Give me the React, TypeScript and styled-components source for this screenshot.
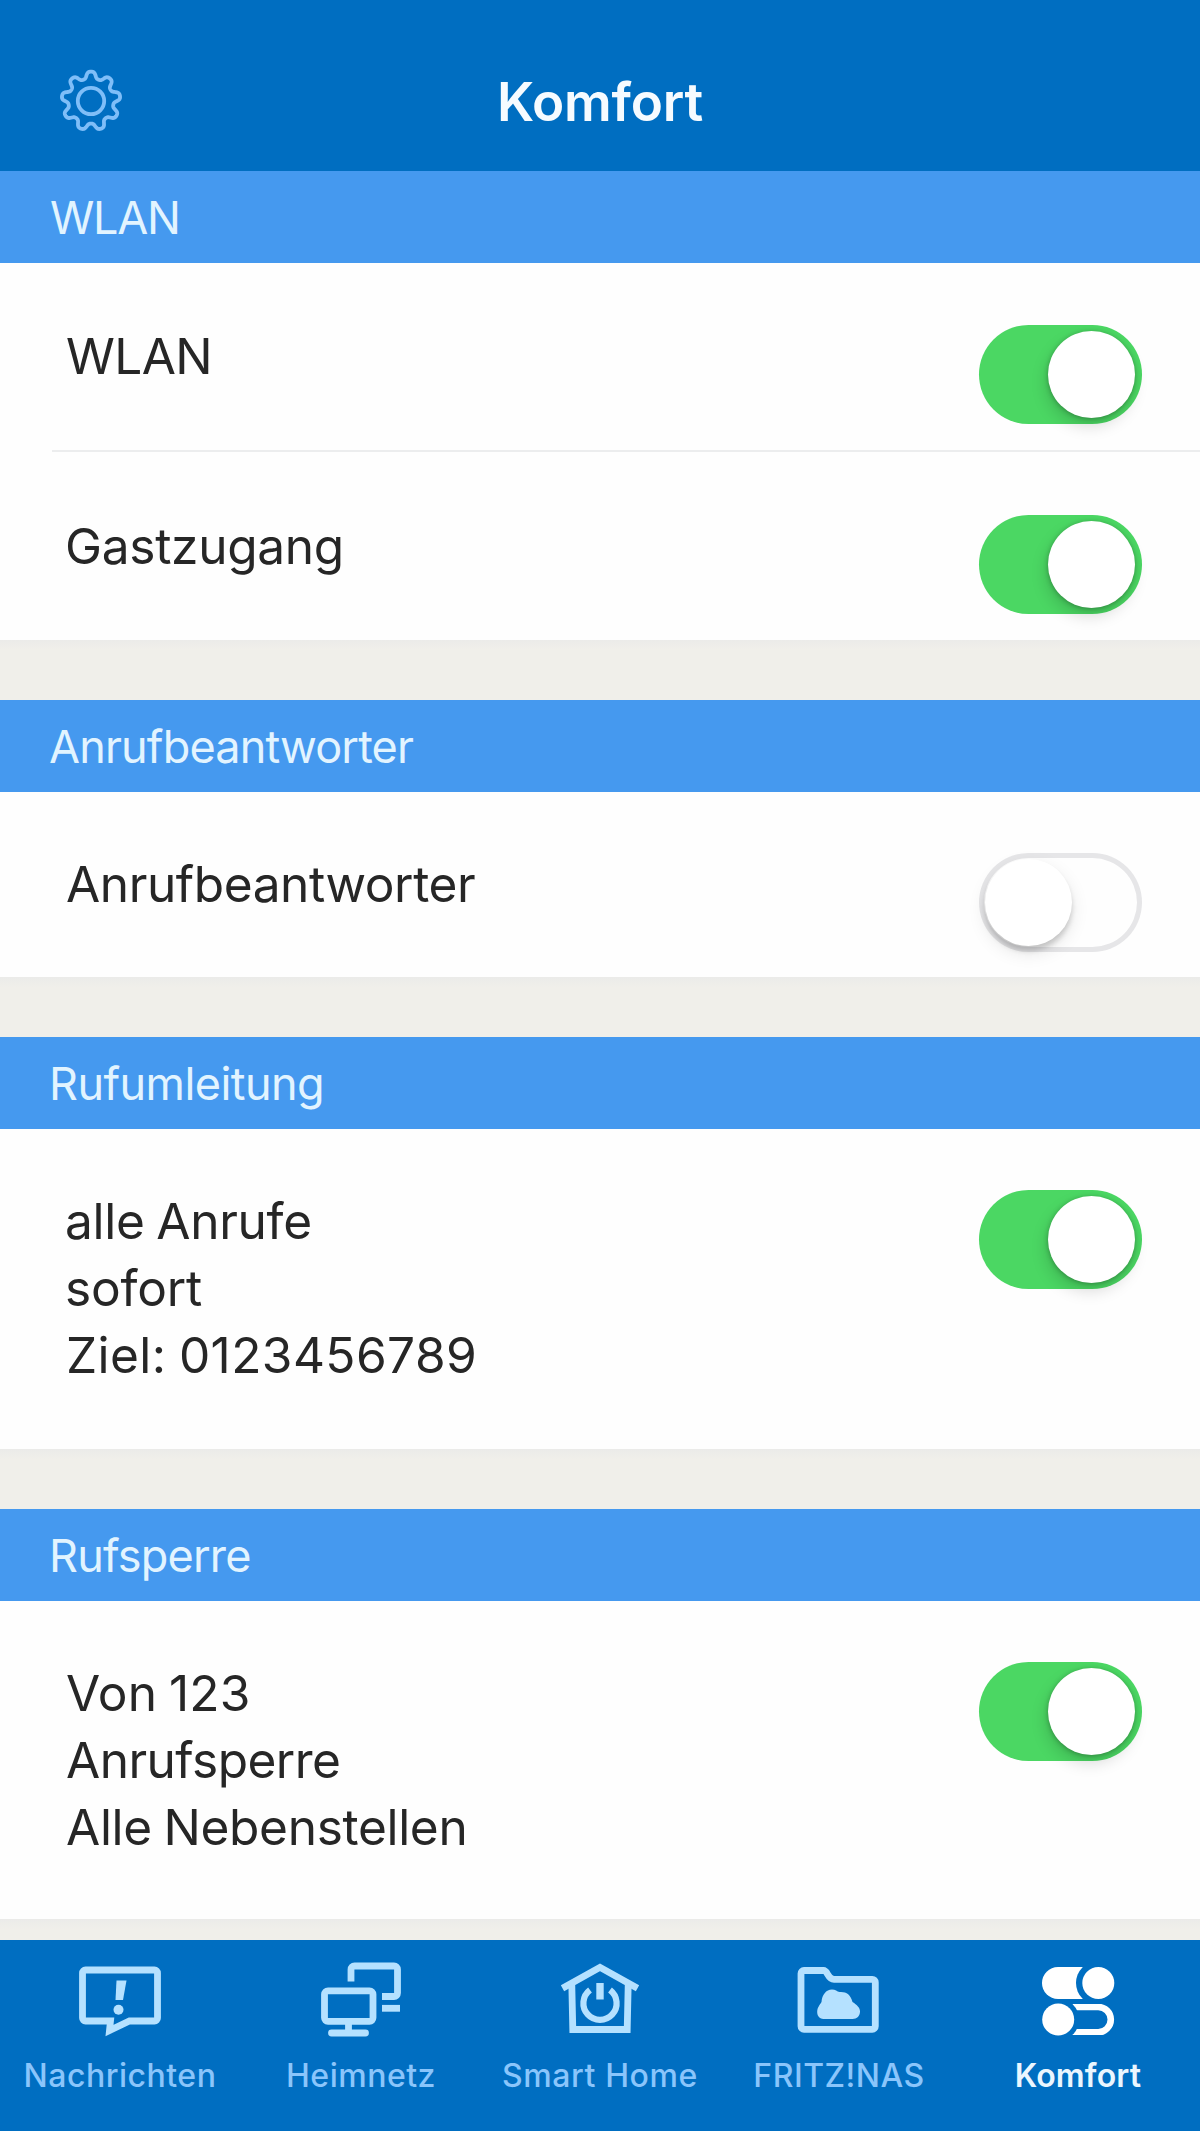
import React, { useState } from "react";
import styled, { createGlobalStyle } from "styled-components";

const GlobalStyle = createGlobalStyle`
  * { box-sizing: border-box; }
  body {
    margin: 0;
    background: #f0efea;
    font-family: Inter, Roboto, "Liberation Sans", sans-serif;
  }
`;

const Screen = styled.div`
  display: flex;
  flex-direction: column;
  width: 1200px;
  height: 2131px;
  overflow: hidden;
  background: #f0efea;
`;

const Header = styled.header`
  flex: none;
  display: grid;
  grid-template-columns: 1fr auto 1fr;
  align-items: start;
  height: 171px;
  padding: 69px 59px 0;
  background: #006ec1;
`;

const GearButton = styled.button`
  display: block;
  width: 64px;
  height: 64px;
  padding: 0;
  border: 0;
  background: none;
  color: #7fbef8;
`;

const Title = styled.h1`
  margin: 1px 0 0;
  font-size: 53px;
  line-height: 64px;
  font-weight: 600;
  letter-spacing: -0.2px;
  color: #f6fbff;
`;

const Content = styled.main`
  flex: 1;
  min-height: 0;
  overflow: hidden;
`;

const Section = styled.section<{ $height: number }>`
  display: flex;
  flex-direction: column;
  height: ${(p) => p.$height}px;
`;

const SectionTitle = styled.h2<{ $inset: number; $tracking: number }>`
  flex: none;
  height: 92px;
  margin: 0;
  padding: 1px 0 0 ${(p) => p.$inset}px;
  font-size: 45px;
  line-height: 92px;
  font-weight: 400;
  letter-spacing: ${(p) => p.$tracking}px;
  color: #e2f4ff;
  background: #4599ef;
`;

const Rows = styled.div`
  flex: 1;
  display: flex;
  flex-direction: column;
  background: #fefefe;
`;

const Divider = styled.hr`
  width: 1148px;
  height: 2px;
  margin: 0 0 0 auto;
  border: 0;
  background: #ecedee;
`;

const Row = styled.div<{ $top: number }>`
  flex: 1;
  display: flex;
  justify-content: space-between;
  align-items: flex-start;
  padding: ${(p) => p.$top}px 58px 0 66px;
`;

const Lines = styled.div`
  font-size: 49.6px;
  line-height: 67.2px;
  word-spacing: -2px;
  color: #262626;
`;

const TextLine = styled.div<{ $tracking: number; $shift: number }>`
  margin-left: ${(p) => p.$shift}px;
  letter-spacing: ${(p) => p.$tracking}px;
  white-space: nowrap;
`;

const Gap = styled.div`
  height: 60px;
  background: linear-gradient(#ebebe9, #f0efea 10px);
`;

const Track = styled.button<{ $on: boolean }>`
  flex: none;
  display: flex;
  justify-content: ${(p) => (p.$on ? "flex-end" : "flex-start")};
  align-items: center;
  width: 163px;
  height: 99px;
  margin-top: 2px;
  padding: 0 7px 0 6px;
  border: 0;
  border-radius: 50px;
  background: ${(p) => (p.$on ? "#4bd763" : "#fefefe")};
  box-shadow: ${(p) => (p.$on ? "none" : "inset 0 0 0 5px #e6e6e8")};
`;

const Knob = styled.span<{ $on: boolean }>`
  width: 87px;
  height: 87px;
  border-radius: 50%;
  background: #ffffff;
  box-shadow: ${(p) =>
    p.$on
      ? "0 1px 5px rgba(0, 0, 0, 0.28), -2px 8px 16px rgba(0, 0, 0, 0.15)"
      : "0 5px 5px rgba(0, 0, 0, 0.16), 0 7px 18px rgba(0, 0, 0, 0.1)"};
`;

const TabBar = styled.nav`
  flex: none;
  display: grid;
  grid-template-columns: 240px 242px 236px 242px 236px;
  height: 191px;
  padding-top: 15px;
  background: #006ec1;
`;

const Tab = styled.button`
  display: flex;
  flex-direction: column;
  align-items: center;
  gap: 17px;
  padding: 0;
  border: 0;
  background: none;
  font-family: inherit;
`;

const TabIcon = styled.svg<{ $active?: boolean }>`
  display: block;
  width: 84px;
  height: 84px;
  overflow: visible;
  fill: none;
  stroke-width: 6.8;
  color: ${(p) => (p.$active ? "#ffffff" : "#b5e1ff")};
`;

const TabLabel = styled.span<{ $active: boolean; $tracking: number }>`
  font-size: 32px;
  line-height: 40px;
  font-weight: ${(p) => (p.$active ? 600 : 500)};
  letter-spacing: ${(p) => p.$tracking}px;
  white-space: nowrap;
  color: ${(p) => (p.$active ? "#eaf6ff" : "#8ac5fb")};
`;

/* Outline of a nine-toothed wheel around (32, 32). */
const gearPath = (() => {
  const steps = 360;
  const points: string[] = [];
  for (let i = 0; i < steps; i++) {
    const a = (i / steps) * Math.PI * 2;
    const r = 26 + (3.4 * Math.tanh(1.5 * Math.cos(9 * a))) / Math.tanh(1.5);
    points.push(`${(32 + r * Math.sin(a)).toFixed(2)} ${(32 - r * Math.cos(a)).toFixed(2)}`);
  }
  return `M${points.join("L")}Z`;
})();

const GearIcon = () => (
  <svg width="64" height="64" viewBox="0 0 64 64" fill="none" stroke="currentColor" strokeWidth="3.8" strokeLinejoin="round">
    <path d={gearPath} />
    <circle cx="32" cy="32" r="13.2" />
  </svg>
);

const MessageIcon = () => (
  <TabIcon viewBox="0 0 84 84">
    <path
      d="M32.5 66H7.5a3 3 0 0 1-3-3V18a3 3 0 0 1 3-3h69a3 3 0 0 1 3 3v45a3 3 0 0 1-3 3H51.5L31.5 75.500Z"
      stroke="currentColor"
    />
    <path d="M38.500 25.500H48.500L45 45H37.500Z" fill="currentColor" />
    <circle cx="40.500" cy="54.800" r="5" fill="currentColor" />
  </TabIcon>
);

const NetworkIcon = () => (
  <TabIcon viewBox="0 0 84 84" stroke="currentColor">
    <rect x="5.5" y="35.8" width="48.5" height="30.5" rx="3.5" />
    <path d="M29.5 66V78" />
    <path d="M12.5 78H46.5" strokeLinecap="round" />
    <path d="M32 26.5V14.5a3.5 3.5 0 0 1 3.5-3.5H75a3.5 3.5 0 0 1 3.5 3.5V38a3.5 3.5 0 0 1-3.5 3.5H63" />
    <path d="M63 53.3H81" />
  </TabIcon>
);

const HomeIcon = () => (
  <TabIcon viewBox="0 0 84 84" stroke="currentColor">
    <path d="M4.5 33.2L42 12.3L79.5 33.2" />
    <path d="M13.8 30L14.8 74.5H69.2L70.2 30" />
    <path d="M32 35A16.6 16.6 0 1 0 52 35" strokeWidth="6.2" />
    <path d="M42 28V44.5" strokeWidth="7.4" />
  </TabIcon>
);

const FolderIcon = () => (
  <TabIcon viewBox="0 0 84 84">
    <path
      d="M7 15.5H26.5C31 15.5 30.5 24.3 37 24.3H75.3a3 3 0 0 1 3 3V71.3a3 3 0 0 1-3 3H7a3 3 0 0 1-3-3V18.5a3 3 0 0 1 3-3Z"
      stroke="currentColor"
    />
    <path
      d="M26.5 64C22 64 20 60 20.2 56.5C20.5 52 22.500 50.500 24.500 47C25 40 29 34.500 35 34.500C38.500 34.500 40 36.500 42.500 37C49 36.500 53.500 39 55.500 47C60 50 63 52.500 63 56.500C63 61 60 64 55.500 64Z"
      fill="currentColor"
    />
  </TabIcon>
);

const SwitchesIcon = () => (
  <TabIcon viewBox="0 0 84 84" $active>
    <mask id="upper-cut">
      <rect width="84" height="84" fill="#fff" />
      <circle cx="62" cy="28" r="22" fill="#000" />
    </mask>
    <mask id="lower-cut">
      <rect width="84" height="84" fill="#fff" />
      <circle cx="22.2" cy="64.5" r="21" fill="#000" />
    </mask>
    <rect x="6" y="12" width="72" height="32" rx="16" fill="currentColor" mask="url(#upper-cut)" />
    <circle cx="62.3" cy="28" r="16" fill="currentColor" />
    <circle cx="22.2" cy="64.5" r="16" fill="currentColor" />
    <rect x="9.5" y="52" width="65.3" height="25.2" rx="12.6" stroke="currentColor" strokeWidth="6.6" mask="url(#lower-cut)" />
  </TabIcon>
);

type Line = { text: string; tracking: number; shift?: number };
type RowData = { id: string; on: boolean; top: number; lines: Line[] };
type SectionData = {
  title: string;
  height: number;
  inset: number;
  tracking: number;
  rows: RowData[];
};

const sections: SectionData[] = [
  {
    title: "WLAN",
    height: 469,
    inset: 50,
    tracking: -1.3,
    rows: [
      { id: "wlan", on: true, top: 60, lines: [{ text: "WLAN", tracking: -0.6 }] },
      { id: "guest", on: true, top: 61, lines: [{ text: "Gastzugang", tracking: -0.3, shift: -1 }] },
    ],
  },
  {
    title: "Anrufbeantworter",
    height: 277,
    inset: 49,
    tracking: -0.83,
    rows: [{ id: "answering", on: false, top: 59, lines: [{ text: "Anrufbeantworter", tracking: -0.42 }] }],
  },
  {
    title: "Rufumleitung",
    height: 412,
    inset: 49,
    tracking: -0.57,
    rows: [
      {
        id: "forwarding",
        on: true,
        top: 59,
        lines: [
          { text: "alle Anrufe", tracking: -0.3, shift: -1 },
          { text: "sofort", tracking: -0.2, shift: -1 },
          { text: "Ziel: 0123456789", tracking: 0.42 },
        ],
      },
    ],
  },
  {
    title: "Rufsperre",
    height: 410,
    inset: 49,
    tracking: -0.8,
    rows: [
      {
        id: "blocking",
        on: true,
        top: 59,
        lines: [
          { text: "Von 123", tracking: 0.1 },
          { text: "Anrufsperre", tracking: -0.55 },
          { text: "Alle Nebenstellen", tracking: -0.33 },
        ],
      },
    ],
  },
];

const tabs = [
  { label: "Nachrichten", Icon: MessageIcon, tracking: 0.5 },
  { label: "Heimnetz", Icon: NetworkIcon, tracking: 0.5 },
  { label: "Smart Home", Icon: HomeIcon, tracking: 0.58 },
  { label: "FRITZ!NAS", Icon: FolderIcon, tracking: 0.5 },
  { label: "Komfort", Icon: SwitchesIcon, tracking: 0.17 },
];

function Toggle({ initial, label }: { initial: boolean; label: string }) {
  const [on, setOn] = useState(initial);
  return (
    <Track type="button" role="switch" aria-checked={on} aria-label={label} $on={on} onClick={() => setOn(!on)}>
      <Knob $on={on} />
    </Track>
  );
}

export default function App() {
  return (
    <>
      <GlobalStyle />
      <Screen>
        <Header>
          <GearButton type="button" aria-label="Einstellungen">
            <GearIcon />
          </GearButton>
          <Title>Komfort</Title>
        </Header>
        <Content>
          {sections.map((section) => (
            <React.Fragment key={section.title}>
              <Section $height={section.height}>
                <SectionTitle $inset={section.inset} $tracking={section.tracking}>
                  {section.title}
                </SectionTitle>
                <Rows>
                  {section.rows.map((row, i) => (
                    <React.Fragment key={row.id}>
                      {i > 0 && <Divider />}
                      <Row $top={row.top}>
                        <Lines>
                          {row.lines.map((line) => (
                            <TextLine key={line.text} $tracking={line.tracking} $shift={line.shift ?? 0}>
                              {line.text}
                            </TextLine>
                          ))}
                        </Lines>
                        <Toggle initial={row.on} label={row.lines[0].text} />
                      </Row>
                    </React.Fragment>
                  ))}
                </Rows>
              </Section>
              <Gap />
            </React.Fragment>
          ))}
        </Content>
        <TabBar>
          {tabs.map(({ label, Icon, tracking }) => (
            <Tab key={label} type="button">
              <Icon />
              <TabLabel $active={label === "Komfort"} $tracking={tracking}>
                {label}
              </TabLabel>
            </Tab>
          ))}
        </TabBar>
      </Screen>
    </>
  );
}
